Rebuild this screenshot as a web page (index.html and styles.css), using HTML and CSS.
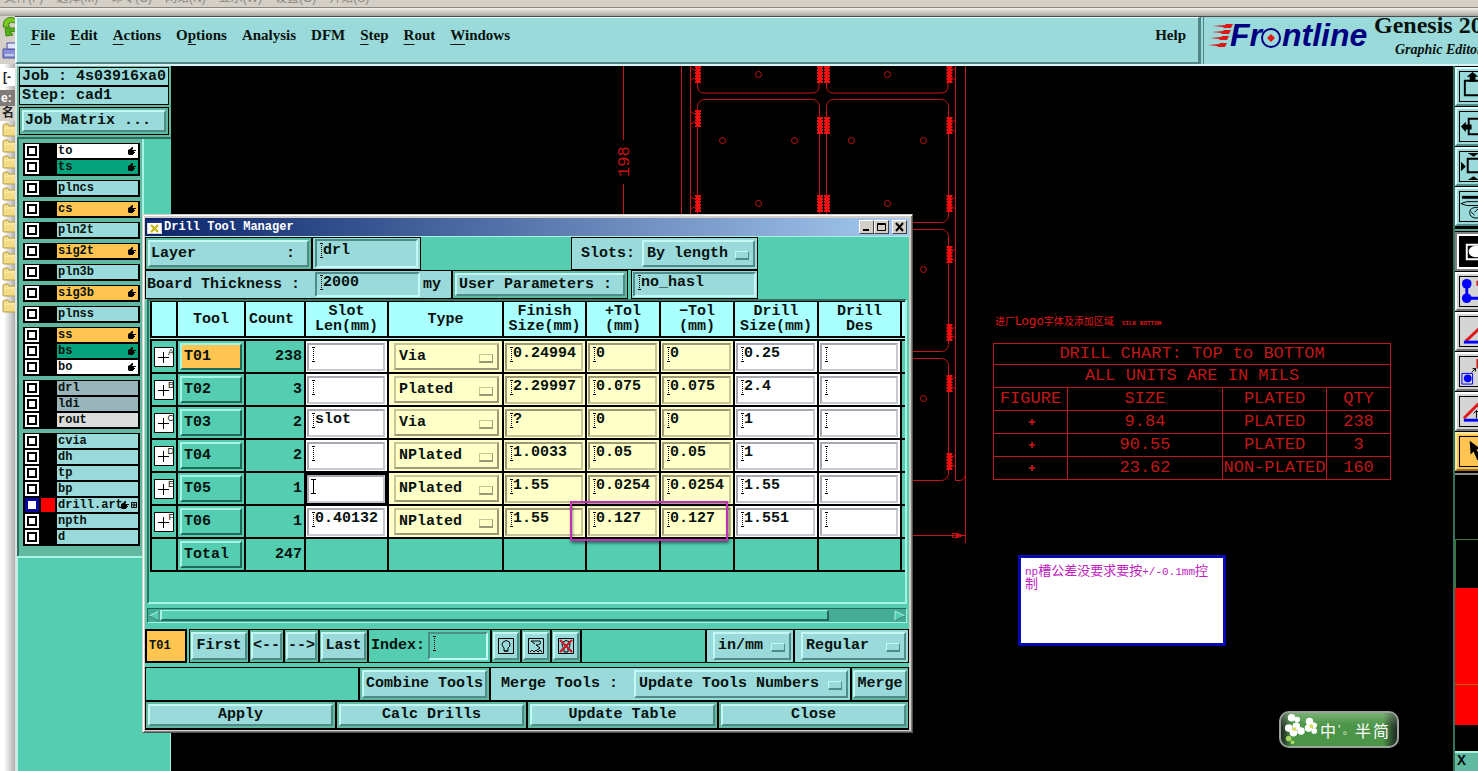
FILE: index.html
```html
<!DOCTYPE html>
<html lang="en">
<head>
<meta charset="utf-8">
<title>Genesis 2000 - Graphic Editor</title>
<link rel="stylesheet" href="styles.css">
</head>
<body>
<svg class="defs" aria-hidden="true">
  <symbol id="hand" viewBox="0 0 8 8"><path d="M0 3l2-1 2-2h1v2L4 3h4v1H6v1h1v1H6v1H5v1H1L0 7z"/></symbol>
  <symbol id="folder" viewBox="0 0 14 14"><path d="M1 3q0-2 2-2h3l1 2h7v10H2q-1 0-1-1z" fill="#f3dc86" stroke="#b99a45"/><path d="M2 5h12" stroke="#fff3bd"/></symbol>
  <symbol id="cross" viewBox="0 0 20 20"><path d="M.5.5h19v19H.5z" fill="#fff" stroke="#000"/><path d="M4 10.5h11M9.500 5v11" stroke="#000"/></symbol>
</svg>
<div class="desktop">
  <div class="explorer">
    <nav class="explorer-menu"><span>文件(F)</span><span>选择(M)</span><span>命令(C)</span><span>网络(N)</span><span>显示(W)</span><span>设置(O)</span><span>开始(S)</span></nav>
    <div class="explorer-bar"></div>
    <div class="explorer-side">
      <svg class="ico-sync" viewBox="0 0 16 24"><path d="M4 5q5-6 12-2v4q-5-2-8 1l2 3H3z" fill="#7bc820" stroke="#3c8a10"/><path d="M5 12h11v4l-6-1 3 4-7 1z" fill="#55b018" stroke="#3c8a10"/></svg>
      <svg class="ico-print" viewBox="0 0 16 24"><path d="M3 9h13v9H3z" fill="#8a8fd8" stroke="#4a4f9c"/><path d="M7 3h9v6H7z" fill="#e0e2ff" stroke="#4a4f9c"/><path d="M5 15h9" stroke="#fff"/></svg>
      <span class="combo">[-</span><span class="drive">e:</span><span class="colhead">名</span>
      <div class="folders">
        <svg><use href="#folder"/></svg><svg><use href="#folder"/></svg><svg><use href="#folder"/></svg><svg><use href="#folder"/></svg><svg><use href="#folder"/></svg><svg><use href="#folder"/></svg><svg><use href="#folder"/></svg><svg><use href="#folder"/></svg><svg><use href="#folder"/></svg><svg><use href="#folder"/></svg><svg><use href="#folder"/></svg><svg><use href="#folder"/></svg>
      </div>
    </div>
  </div>

  <main class="genesis">
    <header class="top">
      <nav class="menubar">
        <a href="#"><u>F</u>ile</a><a href="#"><u>E</u>dit</a><a href="#"><u>A</u>ctions</a><a href="#">O<u>p</u>tions</a><a href="#">Analysis</a><a href="#">DFM</a><a href="#"><u>S</u>tep</a><a href="#"><u>R</u>out</a><a href="#"><u>W</u>indows</a><a class="help" href="#">Help</a>
      </nav>
      <div class="brand">
        <svg class="logo" viewBox="0 0 166 44" role="img" aria-label="Frontline">
          <g fill="#e01818"><path d="M5 9l12-1 1-1h7l-2 4h-7l-1-1zM4 15l11-1 1-1h7l-2 4h-7l-1-1zM2 21l11-1 1-1h7l-2 4h-7l-1-1zM0 28l11-1 1-1h7l-2 4h-7l-1-1z"/></g>
          <text x="22" y="29" class="logo-text">Fr</text><text x="74" y="29" class="logo-text">ntline</text>
          <circle cx="63" cy="21" r="9" fill="#9adada" stroke="#000080" stroke-width="2"/><path d="M63 17l4 4-4 4-4-4z" fill="#e01818"/>
        </svg>
        <div class="brand-text"><div class="product">Genesis 2000</div><div class="module">Graphic Editor</div></div>
      </div>
    </header>

    <aside class="side">
      <div class="job">Job : 4s03916xa0</div>
      <div class="job">Step: cad1</div>
      <div class="matrix"><button class="btn">Job Matrix ...</button></div>
      <div class="layers">
        <div class="list">
          <div class="group">
            <label class="layer white"><input type="checkbox"><i></i><span>to</span><svg><use href="#hand"/></svg></label>
            <label class="layer green"><input type="checkbox"><i></i><span>ts</span><svg><use href="#hand"/></svg></label>
          </div>
          <div class="group"><label class="layer"><input type="checkbox"><i></i><span>plncs</span></label></div>
          <div class="group"><label class="layer orange"><input type="checkbox"><i></i><span>cs</span><svg><use href="#hand"/></svg></label></div>
          <div class="group"><label class="layer"><input type="checkbox"><i></i><span>pln2t</span></label></div>
          <div class="group"><label class="layer orange"><input type="checkbox"><i></i><span>sig2t</span><svg><use href="#hand"/></svg></label></div>
          <div class="group"><label class="layer"><input type="checkbox"><i></i><span>pln3b</span></label></div>
          <div class="group"><label class="layer orange"><input type="checkbox"><i></i><span>sig3b</span><svg><use href="#hand"/></svg></label></div>
          <div class="group"><label class="layer"><input type="checkbox"><i></i><span>plnss</span></label></div>
          <div class="group">
            <label class="layer orange"><input type="checkbox"><i></i><span>ss</span><svg><use href="#hand"/></svg></label>
            <label class="layer green"><input type="checkbox"><i></i><span>bs</span><svg><use href="#hand"/></svg></label>
            <label class="layer white"><input type="checkbox"><i></i><span>bo</span><svg><use href="#hand"/></svg></label>
          </div>
          <div class="group">
            <label class="layer steel"><input type="checkbox"><i></i><span>drl</span></label>
            <label class="layer steel"><input type="checkbox"><i></i><span>ldi</span></label>
            <label class="layer grey"><input type="checkbox"><i></i><span>rout</span></label>
          </div>
          <div class="group">
            <label class="layer"><input type="checkbox"><i></i><span>cvia</span></label>
            <label class="layer"><input type="checkbox"><i></i><span>dh</span></label>
            <label class="layer"><input type="checkbox"><i></i><span>tp</span></label>
            <label class="layer"><input type="checkbox"><i></i><span>bp</span></label>
            <label class="layer shown"><input type="checkbox" checked><i></i><span>drill.art</span><svg class="tight"><use href="#hand"/></svg><svg class="snap" viewBox="0 0 6 6"><path d="M.5.5h5v5h-5zM3 0v6M0 3h6" fill="none" stroke="#000"/></svg></label>
            <label class="layer"><input type="checkbox"><i></i><span>npth</span></label>
            <label class="layer"><input type="checkbox"><i></i><span>d</span></label>
          </div>
        </div>
      </div>
      <div class="side-rest"></div>
    </aside>

    <section class="canvas">
      <svg class="drawing" viewBox="171 66 1282 706" width="1282" height="706" fill="none" stroke="#c81414">
        <path d="M623.500 65V140M623.500 184V535.500H965M681.500 65V480M690.500 65V480M955.500 65V480.500H960Q965.500 480 965.500 473M965.500 65V543"/>
        <path d="M697.500 65V86q0 7 7 7H812q7 0 7-7V65M826.500 65V86q0 7 7 7H941q7 0 7-7V65"/>
        <rect x="697.500" y="99.500" width="122" height="123" rx="7"/><rect x="826.500" y="99.500" width="122" height="123" rx="7"/>
        <rect x="826.500" y="229.500" width="122" height="122" rx="7"/><rect x="826.500" y="358.500" width="122" height="122" rx="7"/>
        <g><circle cx="758.500" cy="74.500" r="3"/><circle cx="887.500" cy="74.500" r="3"/><circle cx="722.500" cy="140.500" r="3"/><circle cx="794.500" cy="140.500" r="3"/><circle cx="851.500" cy="140.500" r="3"/><circle cx="923.500" cy="140.500" r="3"/><circle cx="758.500" cy="203.500" r="3"/><circle cx="887.500" cy="203.500" r="3"/><circle cx="923.500" cy="269.500" r="3"/><circle cx="923.500" cy="398.500" r="3"/></g>
        <g stroke="#f01010" stroke-width="6" stroke-dasharray="2 1">
          <path d="M698 66v17M698 110v17M698 195v17M820 66v17M827 66v17M820 117v17M827 117v17M820 195v17M827 195v17M949.500 66v17M949.500 117v17M949.500 195v17M949.500 246v17M949.500 324v17M949.500 375v17M949.500 453v17"/>
        </g>
        <g stroke="#f01010" stroke-width="4">
          <path d="M698 66v17M698 110v17M698 195v17M820 66v17M827 66v17M820 117v17M827 117v17M820 195v17M827 195v17M949.500 66v17M949.500 117v17M949.500 195v17M949.500 246v17M949.500 324v17M949.500 375v17M949.500 453v17"/>
        </g>
        <path d="M690 67l4 3h3M690 81l4-3h3M690 111l4 3h3M690 125l4-3h3M690 196l4 3h3M690 210l4-3h3M956 68l-4 2M956 80l-4-2M956 120l-4 2M956 132l-4-2M956 197l-4 2M956 209l-4-2M956 249l-4 2M956 261l-4-2M956 327l-4 2M956 338l-4-2M956 377l-4 2M956 389l-4-2M956 455l-4 2M956 467l-4-2"/>
        <path d="M952.500 533.500h4v4h-4z"/><path d="M956 533l7 2.500-7 2.500z" fill="#c81414"/>
        <text class="dim" transform="translate(629 177) rotate(-90)">198</text>
      </svg>
      <div class="silk">进厂<span class="latin">Logo</span>字体及添加区域<span class="tiny">SILK BOTTOM</span></div>
      <table class="chart">
        <colgroup><col class="w1"><col class="w2"><col class="w3"><col class="w4"></colgroup>
        <tr class="short"><td colspan="4">DRILL CHART: TOP to BOTTOM</td></tr>
        <tr><td colspan="4">ALL UNITS ARE IN MILS</td></tr>
        <tr><th>FIGURE</th><th>SIZE</th><th>PLATED</th><th>QTY</th></tr>
        <tr><td class="mark">✚</td><td>9.84</td><td>PLATED</td><td>238</td></tr>
        <tr><td class="mark">✚</td><td>90.55</td><td>PLATED</td><td>3</td></tr>
        <tr><td class="mark">✚</td><td>23.62</td><td>NON-PLATED</td><td>160</td></tr>
      </table>
      <div class="note"><span class="half">np</span>槽公差没要求要按<span class="half">+/-0.1mm</span>控制</div>
    </section>

    <aside class="tools">
      <div class="toolgroup">
        <button class="tool" aria-label="Pan up"><svg viewBox="2 0 30 30"><path d="M7 9h16v15H7z" fill="none" stroke="#000" stroke-width="2"/><path d="M15 0l6 5h-3v5h-6V5H9z"/></svg></button>
        <button class="tool" aria-label="Pan left"><svg viewBox="0 0 30 30"><path d="M9 7h18v16H9z" fill="none" stroke="#000" stroke-width="2"/><path d="M1 15l5-5v3h6v5H6v3z"/></svg></button>
        <button class="tool" aria-label="Zoom to fit"><svg viewBox="0 0 30 30"><path d="M8 7h16v14H8z" fill="none" stroke="#000" stroke-width="2"/><path d="M8 1h12l-6 4zM8 29h12l-6-4zM1 10v10l5-5z"/></svg></button>
        <button class="tool" aria-label="Setup"><svg viewBox="3 0 30 30"><path d="M5 4h25v3H5z"/><path d="M4 12l6-2h20v4H10zM20 16q-7 0-7 5t6 6q8 0 11-5t-2-7zM14 20l4 4M22 17l-4 4" fill="none" stroke="#000"/></svg></button>
      </div>
      <div class="toolgroup grey-group">
        <button class="tool dark" aria-label="Select features"><svg viewBox="2 0 30 30"><path d="M0 0h34v30H0z"/><path d="M9 8h18v15H9z" fill="none" stroke="#fff" stroke-width="2"/><ellipse cx="18" cy="15" rx="7" ry="6" fill="#fff"/></svg></button>
        <button class="tool" aria-label="Select net"><svg viewBox="2 0 30 30"><path d="M9 8v14h16" fill="none" stroke="#00f" stroke-width="3"/><circle cx="9" cy="7" r="5" fill="#00f"/><circle cx="9" cy="22" r="5" fill="#00f"/><path d="M19 4h8v5h-8z" fill="#e01818"/></svg></button>
        <button class="tool" aria-label="Measure"><svg viewBox="0 0 30 30"><path d="M6 25L22 10" stroke="#e01818" stroke-width="3"/><path d="M4 26h25" stroke="#00f" stroke-width="3"/></svg></button>
        <button class="tool" aria-label="Move"><svg viewBox="0 0 30 30"><path d="M2 17h11v11H2z" fill="none" stroke="#00f"/><circle cx="8" cy="22" r="4" fill="#00f"/><path d="M17 2h10v10H17z" fill="#e01818"/><path d="M12 16l4-4M13 12h3v3" fill="none" stroke="#000"/></svg></button>
        <button class="tool" aria-label="Angle"><svg viewBox="0 0 30 30"><path d="M4 22L18 8l9 10" fill="none" stroke="#e01818" stroke-width="3"/><path d="M4 24h25" stroke="#00f" stroke-width="3"/><path d="M17 14v8M14 17l3-3 3 3" fill="none" stroke="#000"/></svg></button>
        <button class="tool gold" aria-label="Pointer"><svg viewBox="0 0 30 30"><path d="M10 4l11 8-4 1 5 9-4 2-4-9-3 3z"/></svg></button>
      </div>
      <div class="preview"><div class="view"></div><div class="fill"></div></div>
      <div class="coord">X :</div>
    </aside>
  </main>

  <section class="dialog" aria-label="Drill Tool Manager">
    <div class="titlebar">
      <svg class="app-ico" viewBox="0 0 15 14"><path d="M0 0h15v14H0z" fill="#d8d4cc"/><path d="M0 0h15v3H0z" fill="#1c2f80"/><path d="M1 3h13v10H1z" fill="#fff"/><path d="M4 5l7 7M11 5l-7 7" stroke="#c8b400" stroke-width="2"/></svg>
      <h1>Drill Tool Manager</h1>
      <button class="wbtn" aria-label="Minimize"><svg viewBox="0 0 11 10"><path d="M2 8h6" stroke="#000" stroke-width="2"/></svg></button><button class="wbtn" aria-label="Maximize"><svg viewBox="0 0 11 10"><path d="M1.500 1.500h8v7h-8zM1 2.500h9" fill="none" stroke="#000"/></svg></button><button class="wbtn close" aria-label="Close"><svg viewBox="0 0 11 10"><path d="M2 1l7 8M9 1L2 9" stroke="#000" stroke-width="2"/></svg></button>
    </div>
    <div class="body">
      <div class="row row-layer">
        <div class="cell layer-cell"><button class="btn spread"><span>Layer</span><span>:</span></button></div>
        <div class="cell light input-cell"><span class="field"><input value="drl" aria-label="Layer"></span></div>
        <div class="grow"></div>
        <div class="cell light slots"><label for="slots">Slots:</label><span class="pick"><select id="slots"><option>By length</option></select></span></div>
      </div>
      <div class="row row-board">
        <div class="cell light board"><label for="thick">Board Thickness :</label><span class="field"><input id="thick" value="2000"></span><span>my</span></div>
        <div class="cell user"><button class="btn left">User Parameters :</button></div>
        <div class="cell light hasl"><span class="field"><input value="no_hasl" aria-label="User parameters"></span></div>
      </div>

      <div class="frame">
        <table class="grid">
          <colgroup><col class="c0"><col class="c1"><col class="c2"><col class="c3"><col class="c4"><col class="c5"><col class="c6"><col class="c7"><col class="c8"><col class="c9"><col class="c10"></colgroup>
          <thead><tr><th></th><th>Tool</th><th class="lead">Count</th><th>Slot<br>Len(mm)</th><th>Type</th><th>Finish<br>Size(mm)</th><th>+Tol<br>(mm)</th><th>−Tol<br>(mm)</th><th>Drill<br>Size(mm)</th><th>Drill<br>Des</th><th class="lead"><br>S</th></tr></thead>
          <tbody>
            <tr><td class="sym"><svg><use href="#cross"/></svg><b>A</b></td><td><button class="btn tool-btn on">T01</button></td><td class="num">238</td><td class="w"><span class="field"><input aria-label="T01 slot length"></span></td><td class="y"><span class="pick"><select aria-label="T01 type"><option>Via</option></select></span></td><td class="y"><span class="field"><input aria-label="T01 finish size" value="0.24994"></span></td><td class="y"><span class="field"><input aria-label="T01 plus tolerance" value="0"></span></td><td class="y"><span class="field"><input aria-label="T01 minus tolerance" value="0"></span></td><td class="w"><span class="field"><input aria-label="T01 drill size" value="0.25"></span></td><td class="w"><span class="field"><input aria-label="T01 designator"></span></td><td></td></tr>
            <tr><td class="sym"><svg><use href="#cross"/></svg><b>B</b></td><td><button class="btn tool-btn">T02</button></td><td class="num">3</td><td class="w"><span class="field"><input aria-label="T02 slot length"></span></td><td class="y"><span class="pick"><select aria-label="T02 type"><option>Plated</option></select></span></td><td class="y"><span class="field"><input aria-label="T02 finish size" value="2.29997"></span></td><td class="y"><span class="field"><input aria-label="T02 plus tolerance" value="0.075"></span></td><td class="y"><span class="field"><input aria-label="T02 minus tolerance" value="0.075"></span></td><td class="w"><span class="field"><input aria-label="T02 drill size" value="2.4"></span></td><td class="w"><span class="field"><input aria-label="T02 designator"></span></td><td></td></tr>
            <tr><td class="sym"><svg><use href="#cross"/></svg><b>C</b></td><td><button class="btn tool-btn">T03</button></td><td class="num">2</td><td class="w"><span class="field"><input aria-label="T03 slot length" value="slot"></span></td><td class="y"><span class="pick"><select aria-label="T03 type"><option>Via</option></select></span></td><td class="y"><span class="field"><input aria-label="T03 finish size" value="?"></span></td><td class="y"><span class="field"><input aria-label="T03 plus tolerance" value="0"></span></td><td class="y"><span class="field"><input aria-label="T03 minus tolerance" value="0"></span></td><td class="w"><span class="field"><input aria-label="T03 drill size" value="1"></span></td><td class="w"><span class="field"><input aria-label="T03 designator"></span></td><td></td></tr>
            <tr><td class="sym"><svg><use href="#cross"/></svg><b>D</b></td><td><button class="btn tool-btn">T04</button></td><td class="num">2</td><td class="w"><span class="field"><input aria-label="T04 slot length"></span></td><td class="y"><span class="pick"><select aria-label="T04 type"><option>NPlated</option></select></span></td><td class="y"><span class="field"><input aria-label="T04 finish size" value="1.0033"></span></td><td class="y"><span class="field"><input aria-label="T04 plus tolerance" value="0.05"></span></td><td class="y"><span class="field"><input aria-label="T04 minus tolerance" value="0.05"></span></td><td class="w"><span class="field"><input aria-label="T04 drill size" value="1"></span></td><td class="w"><span class="field"><input aria-label="T04 designator"></span></td><td></td></tr>
            <tr><td class="sym"><svg><use href="#cross"/></svg><b>E</b></td><td><button class="btn tool-btn">T05</button></td><td class="num">1</td><td class="w focus"><span class="field"><input aria-label="T05 slot length"></span></td><td class="y"><span class="pick"><select aria-label="T05 type"><option>NPlated</option></select></span></td><td class="y"><span class="field"><input aria-label="T05 finish size" value="1.55"></span></td><td class="y"><span class="field"><input aria-label="T05 plus tolerance" value="0.0254"></span></td><td class="y"><span class="field"><input aria-label="T05 minus tolerance" value="0.0254"></span></td><td class="w"><span class="field"><input aria-label="T05 drill size" value="1.55"></span></td><td class="w"><span class="field"><input aria-label="T05 designator"></span></td><td></td></tr>
            <tr><td class="sym"><svg><use href="#cross"/></svg><b>F</b></td><td><button class="btn tool-btn">T06</button></td><td class="num">1</td><td class="w"><span class="field"><input aria-label="T06 slot length" value="0.40132"></span></td><td class="y"><span class="pick"><select aria-label="T06 type"><option>NPlated</option></select></span></td><td class="y"><span class="field"><input aria-label="T06 finish size" value="1.55"></span></td><td class="y"><span class="field"><input aria-label="T06 plus tolerance" value="0.127"></span></td><td class="y"><span class="field"><input aria-label="T06 minus tolerance" value="0.127"></span></td><td class="w"><span class="field"><input aria-label="T06 drill size" value="1.551"></span></td><td class="w"><span class="field"><input aria-label="T06 designator"></span></td><td></td></tr>
            <tr><td></td><td><button class="btn tool-btn">Total</button></td><td class="num">247</td><td></td><td></td><td></td><td></td><td></td><td></td><td></td><td></td></tr>
          </tbody>
        </table>
        <div class="highlight"></div>
      </div>
      <div class="scroll">
        <svg viewBox="0 0 12 12"><path d="M11 1L1 6l10 5z" fill="#54cdb0" stroke="#a8f4e4"/><path d="M11 1v10L1 6" fill="none" stroke="#226a58"/></svg>
        <div class="thumb"></div><div class="trough"></div>
        <svg viewBox="0 0 12 12"><path d="M1 1l10 5-10 5z" fill="#54cdb0" stroke="#a8f4e4"/><path d="M11 6L1 11" stroke="#226a58"/></svg>
      </div>

      <div class="row row-nav">
        <div class="cell current">T01</div>
        <div class="cell nav first"><button class="btn">First</button></div>
        <div class="cell nav arrow"><button class="btn">&lt;--</button></div>
        <div class="cell nav arrow"><button class="btn">--&gt;</button></div>
        <div class="cell nav last"><button class="btn">Last</button></div>
        <div class="cell index"><label for="index">Index:</label><span class="field"><input id="index"></span></div>
        <div class="cell nav ico"><button class="btn" aria-label="Highlight"><svg viewBox="0 0 16 16"><path d="M.5.5h15v15H.5zM6 10q-2-2-2-4t4-3.500Q12 3 12 6t-2 4v3H6zM6 13h4" fill="none" stroke="#000"/></svg></button></div>
        <div class="cell nav ico"><button class="btn" aria-label="Redraw"><svg viewBox="0 0 16 16"><path d="M.5.5h15v15H.5zM3 3h9q2 4-4 4l4 3-3 2M3 3l4 3M2 14l2-2 2 2 2-2 2 2 2-2 2 2" fill="none" stroke="#000"/></svg></button></div>
        <div class="cell nav ico"><button class="btn" aria-label="Clear highlight"><svg viewBox="0 0 16 16"><path d="M.5.5h15v15H.5zM6 11Q4 8 4 6t4-3.500Q12 3 12 6t-2 5v3H6z" fill="none" stroke="#000"/><path d="M2 2l12 12M14 2L2 14" stroke="#d01020" stroke-width="2"/></svg></button></div>
        <div class="cell grow"></div>
        <div class="cell light unit"><span class="pick"><select aria-label="Units"><option>in/mm</option></select></span></div>
        <div class="cell light mode"><span class="pick"><select aria-label="Mode"><option>Regular</option></select></span></div>
      </div>
      <div class="row row-merge">
        <div class="cell grow"></div>
        <div class="cell combine"><button class="btn">Combine Tools</button></div>
        <div class="cell light merge"><label for="merge">Merge Tools :</label><span class="pick"><select id="merge"><option>Update Tools Numbers</option></select></span></div>
        <div class="cell merge-btn"><button class="btn">Merge</button></div>
      </div>
      <div class="row row-actions">
        <div class="cell"><button class="btn">Apply</button></div><div class="cell"><button class="btn">Calc Drills</button></div><div class="cell"><button class="btn">Update Table</button></div><div class="cell"><button class="btn">Close</button></div>
      </div>
    </div>
  </section>

  <div class="ime">
    <svg class="flowers" viewBox="0 0 36 36"><g fill="#fff"><circle cx="8" cy="5" r="4"/><circle cx="14" cy="7" r="3"/><circle cx="5" cy="16" r="4"/><circle cx="13" cy="14" r="4"/><circle cx="10" cy="21" r="4"/><circle cx="18" cy="19" r="4"/><circle cx="27" cy="9" r="4"/><circle cx="32" cy="13" r="3"/><circle cx="26" cy="16" r="4"/><circle cx="32" cy="19" r="3"/></g><g fill="#d8dc50"><circle cx="11" cy="17" r="2"/><circle cx="29" cy="14" r="2"/></g><g fill="#a8d860"><circle cx="5" cy="27" r="3"/><circle cx="9" cy="31" r="2"/></g></svg>
    <span>中</span><span class="punct">’。</span><span>半</span><span>简</span>
  </div>
</div>
</body>
</html>
```

FILE: styles.css
```css
* { box-sizing: border-box; }
body { margin: 0; background: #000; }
.defs { display: none; }
a { color: inherit; text-decoration: none; }
button, input, select { font: inherit; color: inherit; margin: 0; border-radius: 0; appearance: none; min-width: 0; outline: 0; }
svg { display: block; flex: none; }

.desktop {
  --mono: "Liberation Mono", "DejaVu Sans Mono", monospace;
  --teal: #54cdb0;
  --light: #9adada;
  position: relative; min-height: 100vh; overflow: hidden;
  font: bold 15px/18px var(--mono); color: #08120f;
}

/* file manager behind the editor */
.explorer { position: absolute; inset: 0; background: #d4d0c8; color: #8c8880; font: 12px/12px "Liberation Sans", "Noto Sans CJK SC", sans-serif; }
.explorer-menu { display: flex; align-items: flex-end; gap: 13px; height: 8px; padding: 0 4px 3px; overflow: hidden; border-bottom: 1px solid #8c8880; }
.explorer-menu span { white-space: nowrap; }
.explorer-bar { height: 8px; background: linear-gradient(#f4f2ee, #a8a49c); }
.explorer-side { display: flex; flex-direction: column; width: 16px; height: calc(100vh - 16px); overflow: hidden; background: linear-gradient(90deg, #fff 4px, #a8a8a8 16px); }
.ico-sync, .ico-print { width: 16px; height: 24px; background: #d4d0c8; }
.combo, .drive, .colhead { display: block; height: 18px; margin-top: 4px; padding-left: 3px; font: bold 12px/18px "Liberation Sans", "Noto Sans CJK SC", sans-serif; background: #fff; color: #222; }
.drive { background: #807c78; color: #fff; height: 16px; line-height: 16px; padding-left: 1px; }
.colhead { background: #d4d0c8; height: 15px; margin-top: 0; padding: 0 0 0 2px; line-height: 14px; }
.folders svg { width: 14px; height: 14px; margin: 2px 0 2px 2px; }

/* editor window */
.genesis {
  position: absolute; inset: 16px 0 0 15px; display: grid; overflow: hidden;
  grid-template: 49px 1fr / 156px 1fr 25px; background: #000; border-top: 1px solid #504848;
}
.top { grid-column: 1 / -1; display: flex; background: var(--light); border-bottom: 2px solid #d8f4f4; min-width: 0; }
.menubar { flex: 1; display: flex; gap: 15px; padding: 8px 12px 0 14px; font: bold 15px/18px "Liberation Serif", serif; border: 1px solid; border-width: 1px 2px 2px 2px; border-color: #e8ffff #4f8585 #4f8585 #e8ffff; }
.menubar u { text-underline-offset: 4px; }
.help { margin-left: auto; }
.brand { display: flex; width: 278px; overflow: hidden; border-left: 4px double #4f8585; padding-left: 4px; }
.logo { width: 166px; height: 44px; overflow: visible; }
.logo-text { font: italic bold 32px "Liberation Sans", sans-serif; fill: #000080; }
.brand-text { font-family: "Liberation Serif", serif; white-space: nowrap; }
.product { font-size: 24px; font-weight: bold; line-height: 16px; }
.module { padding: 8px 0 0 21px; font-size: 14px; font-style: italic; line-height: 18px; }

.side { display: flex; flex-direction: column; min-height: 0; background: #62b9a2; border-left: 2px solid #e0e4e0; }
.job { margin: 1px 2px 0; height: 19px; padding-left: 2px; background: var(--light); border: 1px solid #000; line-height: 17px; white-space: nowrap; }
.job + .job { margin-top: 0; }
.matrix { margin: 2px; border: 1px solid #000; padding: 2px; }
.btn { display: block; width: 100%; height: 100%; padding: 0; background: var(--light); border: 2px solid; border-color: #c4f8f4 #4f8c88 #4f8c88 #c4f8f4; text-align: center; line-height: 18px; white-space: nowrap; }
.matrix .btn { text-align: left; padding-left: 1px; }
.layers { display: flex; background: var(--teal); border-top: 2px solid #2d705f; }
.list { display: flex; flex-direction: column; gap: 4px; width: 127px; padding: 4px 2px 10px 4px; background: #62b9a2; border-left: 2px solid #2d705f; border-right: 2px solid #a8f4e4; }
.group { background: #000; padding: 1px 2px 0 2px; }
.layer { display: flex; align-items: center; height: 16px; padding-bottom: 2px; font-size: 12px; line-height: 14px; }
.layer input { flex: none; width: 14px; height: 14px; border: 2px solid #fff; background: #fff; box-shadow: inset 0 0 0 2px #000; }
.layer input:checked { border-color: #0808a0; box-shadow: inset 0 0 0 1px #0808a0; }
.layer i { flex: none; width: 14px; height: 14px; margin: 0 2px; }
.shown i { background: #f00; }
.layer span { flex: 1; height: 14px; padding-left: 1px; background: var(--light); }
.layer svg { position: relative; width: 8px; height: 8px; margin: 3px 2px 3px -10px; }
.layer svg.tight { margin: 3px 1px 3px -17px; }
.layer svg.snap { width: 6px; height: 6px; margin: 3px 1px; }
.white span { background: #fff; }
.green span { background: #04a37c; }
.orange span { background: #ffc550; }
.steel span { background: #9ab4bc; }
.grey span { background: #dcdcdc; }
.side-rest { flex: 1; background: var(--teal); border: 2px solid #a8f4e4; border-width: 2px 1px 0 1px; }

.canvas { position: relative; overflow: hidden; min-width: 0; }
.drawing { position: absolute; left: 0; top: 0; }
.dim { font: 17px var(--mono); fill: #c81414; stroke: none; }
.silk { position: absolute; left: 824px; top: 248px; font: 10px/14px "DejaVu Sans", "Noto Sans CJK SC", sans-serif; color: #e01818; white-space: nowrap; }
.silk .latin { font-size: 12px; }
.silk .tiny { margin-left: 8px; font: bold 6px/14px var(--mono); }
.chart { position: absolute; left: 822px; top: 277px; border-collapse: collapse; table-layout: fixed; width: 398px; font: 17px/18px var(--mono); color: #c01818; text-align: center; }
.chart td, .chart th { height: 23px; padding: 0; border: 1px solid #c01818; font-weight: normal; }
.chart .short td { height: 21px; }
.chart .mark { font-size: 12px; padding-left: 2px; }
.w1 { width: 74px; } .w2 { width: 155px; } .w3 { width: 104px; } .w4 { width: 64px; }
.note { position: absolute; left: 847px; top: 489px; width: 208px; height: 91px; padding: 5px 8px 0 4px; background: #fff; border: 3px solid #0808b4; font: 13px/13px "Noto Sans CJK SC", sans-serif; color: #c020c0; word-break: break-all; }
.note .half { font: 11px/1px var(--mono); }

.tools { display: flex; flex-direction: column; min-width: 0; overflow: hidden; border-left: 2px solid #34705f; }
.toolgroup { flex: none; display: grid; grid-auto-rows: 39px; gap: 1px; padding: 1px 0 3px; width: 42px; border-bottom: 2px solid #57ab98; }
.grey-group { border-color: #8c8c8c; padding: 1px 0 2px; }
.tool { width: 42px; padding: 2px; background: var(--light); border: 2px solid; border-color: #e0ffff #4f8c88 #4f8c88 #e0ffff; }
.tool svg { width: 31px; height: 31px; border: 1px solid #000; }
.grey-group .tool { background: #d4d4d4; border-color: #fff #777 #777 #fff; }
.grey-group .dark { background: #fff; border-color: #808080; }
.grey-group .gold { background: #ffc550; border-color: #ffe8a0 #9a7020 #9a7020 #ffe8a0; }
.preview { flex: 1; display: flex; flex-direction: column; min-height: 0; padding-bottom: 26px; }
.view { flex: none; height: 49px; margin-top: 64px; border: 1px solid #3c7a30; border-width: 1px 0 0 1px; }
.fill { flex: 1; background: linear-gradient(#f00 96px, #b86000 96px, #b86000 97px, #f00 97px); }
.coord { flex: none; height: 20px; padding-left: 2px; border-top: 2px solid #a8f4e4; background: #62b9a2; font-size: 15px; white-space: nowrap; }

/* drill tool manager */
.dialog { position: absolute; left: 142px; top: 214px; width: 771px; background: #d4d0c8; border: 1px solid; border-color: #d4d0c8 #505050 #505050 #d4d0c8; box-shadow: inset 1px 1px #fff, inset -1px -1px #808080; padding: 3px 3px 2px 2px; }
.titlebar { display: flex; align-items: center; height: 18px; padding: 0 2px; background: linear-gradient(90deg, #0a246a, #a6caf0); }
.app-ico { width: 15px; height: 14px; }
.titlebar h1 { flex: 1; margin: 0 0 0 2px; color: #fff; font: bold 12px/16px var(--mono); }
.wbtn { width: 15px; height: 14px; padding: 0; background: #d4d0c8; border: 1px solid; border-color: #fff #404040 #404040 #fff; }
.wbtn svg { width: 11px; height: 10px; margin: auto; }
.close { margin-left: 3px; }
.body { background: var(--teal); border-top: 1px solid #a8f4e4; }
.row { display: flex; }
.cell { display: flex; align-items: center; border: 1px solid #000; background: #62b9a2; padding: 2px; min-width: 0; }
.light { background: var(--light); }
.grow { flex: 1; background: var(--teal); }
.field { position: relative; display: block; flex: 1; min-width: 0; height: 100%; }
.field input { display: block; width: 100%; height: 100%; padding: 0 0 6px 6px; background: transparent; border: 2px solid; border-color: #4f8c88 #c4f8f4 #c4f8f4 #4f8c88; line-height: 18px; }
.field::before { content: ""; position: absolute; left: 4px; top: 4px; width: 5px; height: 15px; pointer-events: none;
  background: repeating-linear-gradient(#000 0 1px, transparent 1px 2px) 2px 0 / 1px 15px no-repeat, linear-gradient(#000, #000) 1px 0 / 3px 1px no-repeat, linear-gradient(#000, #000) 1px 14px / 3px 1px no-repeat; }
.pick { position: relative; display: block; flex: 1; min-width: 0; height: 100%; }
.pick select { display: block; width: 100%; height: 100%; padding: 0 24px 0 3px; background: transparent; border: 2px solid; border-color: #c4f8f4 #4f8c88 #4f8c88 #c4f8f4; line-height: 18px; }
.pick::after { content: ""; position: absolute; right: 6px; top: 50%; width: 12px; height: 6px; margin-top: -3px; border: 2px solid; border-color: #c4f8f4 #4f8c88 #4f8c88 #c4f8f4; border-width: 1px 1px 2px 1px; pointer-events: none; }

.row-layer { height: 33px; padding-right: 151px; }
.layer-cell { width: 167px; }
.spread { display: flex; justify-content: space-between; align-items: center; padding: 0 12px 0 1px; }
.input-cell { width: 109px; padding: 1px 2px; }
.slots { width: 187px; padding-left: 9px; gap: 7px; }
.row-board { height: 29px; }
.board { width: 307px; padding: 1px 10px 1px 1px; gap: 3px; }
.board label { width: 166px; }
.board .field { flex: none; width: 105px; }
.user { width: 176px; }
.left { text-align: left; padding-left: 2px; }
.hasl { width: 127px; margin-left: 3px; padding: 1px; }
.row-board .field input { padding-bottom: 4px; }
.row-board .field::before { top: 3px; }

.frame { position: relative; overflow: hidden; margin: 0 2px 4px; padding: 0 0 30px 1px; border: 2px solid; border-color: #34705f #a8f4e4 #a8f4e4 #34705f; }
.grid { width: 841px; table-layout: fixed; border-collapse: collapse; }
.c0 { width: 26px; } .c1 { width: 68px; } .c2 { width: 60px; } .c3, .c5 { width: 83px; } .c4 { width: 115px; } .c6, .c7 { width: 74px; } .c8 { width: 84px; } .c9 { width: 83px; } .c10 { width: 91px; }
.grid th, .grid td { border: 2px solid #000; padding: 0; }
.grid th { height: 37px; background: #aff; border-top-width: 1px; border-bottom: 5px double #000; font-weight: bold; line-height: 15px; }
.grid td { height: 33px; }
.grid .lead { text-align: left; padding-left: 3px; }
.sym { position: relative; }
.sym svg { width: 20px; height: 20px; margin: auto; }
.sym b { position: absolute; right: 2px; top: 6px; font: 9px/10px "Liberation Sans", sans-serif; }
.tool-btn { width: calc(100% - 4px); height: 27px; margin: 2px; background: var(--teal); border-color: #a8f4e4 #226a58 #226a58 #a8f4e4; text-align: left; padding-left: 2px; }
.on { background: #ffc550; }
.grid .num { text-align: right; padding-right: 2px; }
.w { background: #fff; }
.y { background: #ffffc8; }
.grid .field { height: 28px; margin: 1px 2px 1px 1px; }
.grid .field input { border-color: #a8a8b0 #c8c8d0 #c8c8d0 #a8a8b0; padding-bottom: 7px; }
.grid .y .field input { border-color: #9c9878 #c8c49c #c8c49c #9c9878; }
.grid .focus { box-shadow: inset 0 0 0 2px #000; }
.focus .field::before { background: linear-gradient(#000, #000) 2px 0 / 1px 15px no-repeat, linear-gradient(#000, #000) 0 0 / 5px 1px no-repeat, linear-gradient(#000, #000) 0 14px / 5px 1px no-repeat; }
.grid .pick { height: 27px; margin: 2px 3px 2px 5px; }
.grid .pick select { border-color: #c8c49c #9c9878 #9c9878 #c8c49c; }
.grid .pick::after { border-color: #c8c49c #9c9878 #9c9878 #c8c49c; }
.highlight { position: absolute; left: 421px; top: 200px; width: 158px; height: 40px; border: 2px solid #c030b8; box-shadow: 1px 2px 3px #0008, inset 1px 2px 3px #0006; }

.scroll { display: flex; align-items: center; height: 15px; margin: 0 2px 6px; background: #44ac94; border: 1px solid; border-color: #226a58 #a8f4e4 #a8f4e4 #226a58; }
.scroll svg { width: 12px; height: 12px; }
.thumb { flex: 669; height: 11px; background: var(--teal); border: 2px solid; border-color: #a8f4e4 #226a58 #226a58 #a8f4e4; border-width: 1px 2px 2px 2px; }
.trough { flex: 65; }

.row-nav { height: 34px; margin-bottom: 4px; }
.current { width: 42px; background: #ffc550; margin-right: 2px; font-size: 12px; padding-left: 2px; border-width: 2px; }
.nav { padding: 2px 1px; }
.first { width: 60px; } .arrow { width: 35px; } .last { width: 49px; } .ico { width: 30px; }
.nav .btn svg { width: 16px; height: 16px; margin: auto; }
.index { width: 123px; background: var(--teal); gap: 3px; }
.unit { width: 88px; padding-left: 6px; }
.mode { width: 115px; padding-left: 6px; }
.row-merge { height: 34px; }
.combine { width: 131px; }
.merge { width: 361px; padding-left: 10px; gap: 16px; }
.merge-btn { width: 58px; padding: 2px 1px; }
.row-actions { height: 29px; }
.row-actions .cell { flex: 1; border-width: 1px 1px 2px; }

.ime { position: absolute; right: 79px; top: 711px; display: flex; align-items: center; gap: 2px; width: 120px; height: 37px; padding: 0 8px 0 3px; border: 2px solid #9aa49a; border-radius: 10px; background: linear-gradient(90deg, #1c2420, #4c9448 10%, #4c9448 88%, #1c2420); box-shadow: inset 0 12px 8px -6px #d8f0d055; color: #fff; font: 16px/24px "Noto Sans CJK SC", sans-serif; }
.flowers { width: 34px; height: 34px; }
.punct { font-size: 10px; white-space: nowrap; }
```
